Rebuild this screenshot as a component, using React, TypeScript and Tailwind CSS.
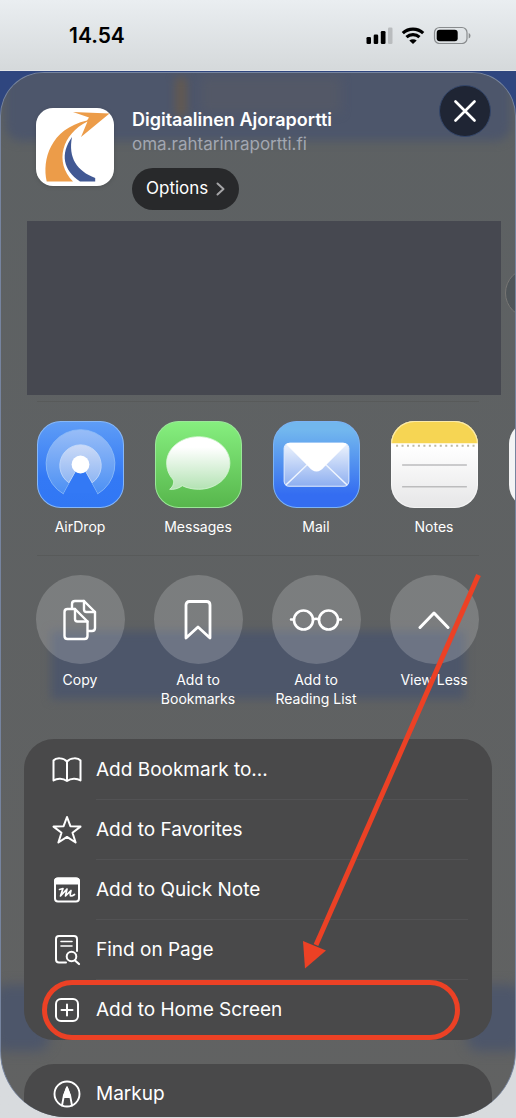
import React from 'react';

interface ListRowProps {
  icon: React.ReactNode;
  label: string;
  divider?: boolean;
  highlighted?: boolean;
}

const stroke = {
  fill: 'none',
  stroke: '#fff',
  strokeWidth: 2,
  strokeLinecap: 'round' as const,
  strokeLinejoin: 'round' as const,
};

const StatusBar: React.FC = () => (
  <header className="flex h-[71px] items-center justify-between border-b border-[#e3e5e7] bg-gradient-to-b from-[#eaeef1] to-[#d5d9db] pl-[69px] pr-[45px]">
    <time className="pt-px text-[21px] font-semibold text-black">14.54</time>
    <svg width="105" height="18" viewBox="366 25 105 18" aria-label="Signal, Wi-Fi and battery">
      <rect x="366.500" y="36" width="4.500" height="7" rx="1.300" />
      <rect x="373.700" y="33.500" width="4.500" height="9.500" rx="1.300" />
      <rect x="380.800" y="30" width="4.700" height="13" rx="1.300" />
      <rect x="388" y="26.500" width="4.500" height="16.500" rx="1.300" fill="#b9bcbe" />
      <g fill="none" stroke="#000" strokeWidth="3.200">
        <path d="M402.800 32.200a15 15 0 0 1 20.400 0" />
        <path d="M406.500 36.100a9.600 9.600 0 0 1 13 0" />
      </g>
      <path d="M409.300 39.600a5.500 5.500 0 0 1 7.400 0l-3.700 3.400z" />
      <rect x="434.500" y="26.500" width="32.500" height="16" rx="5" fill="none" stroke="#898c8e" strokeWidth="1.200" />
      <rect x="436.700" y="28.700" width="21" height="11.600" rx="3" />
      <path d="M468.700 32v5.400q1.800-.7 1.800-2.700t-1.800-2.700" fill="#898c8e" />
    </svg>
  </header>
);

// Page content that shines through the translucent sheet
const Backdrop: React.FC = () => (
  <div className="pointer-events-none absolute inset-0" aria-hidden="true">
    <div className="absolute inset-x-1 -top-4 h-[84px] rounded-2xl bg-[#4d566b] blur-[5px]" />
    <div className="absolute left-[174px] top-1 h-10 w-3 rounded bg-[#625951] blur-[4px]" />
    <div className="absolute left-[200px] top-1 h-9 w-[140px] rounded bg-[#535867] blur-[5px]" />
    <div className="absolute -right-[40px] top-[195px] size-[50px] rounded-full border border-[#777674] bg-[#4f5559]" />
    <div className="absolute inset-x-[50px] top-[558px] h-[68px] bg-[#4d566a] blur-[5px]" />
    <div className="absolute -left-2 top-[912px] h-[66px] w-14 rounded-xl bg-[#4d566a] blur-[6px]" />
    <div className="absolute -right-2 top-[912px] h-[66px] w-14 rounded-xl bg-[#4d566a] blur-[6px]" />
  </div>
);

const SiteIcon: React.FC = () => (
  <svg width="78" height="78" viewBox="36 108 78 78" className="shrink-0 drop-shadow">
    <rect x="36" y="108" width="78" height="78" rx="17" fill="#fff" />
    <path d="M46.700 181.500C42 160 50 129 87 120.500L89 117.500L73 112L109.500 113.500L81 137L87.500 121.500C62 134 54 162 73 181.500Z" fill="#ec9c49" />
    <path d="M72 137C68 158 77 171 95.200 178V181.500H80C63 170 60 154 72 137Z" fill="#415893" />
  </svg>
);

const AirDropIcon: React.FC = () => (
  <svg width="87" height="87" viewBox="0 0 86 86">
    <defs>
      <linearGradient id="airBg" x2="0" y2="1">
        <stop stopColor="#5f9df6" />
        <stop offset=".65" stopColor="#3379f5" />
        <stop offset="1" stopColor="#3177f4" />
      </linearGradient>
      <linearGradient id="airOuter" x2="0" y2="1">
        <stop stopColor="#98bdf7" />
        <stop offset="1" stopColor="#4c90f4" />
      </linearGradient>
      <linearGradient id="airInner" x2="0" y2="1">
        <stop stopColor="#cbdaf7" />
        <stop offset="1" stopColor="#8fb6f3" />
      </linearGradient>
    </defs>
    <rect x=".5" y=".5" width="85" height="85" rx="23" fill="url(#airBg)" stroke="#86b7f8" />
    <path d="M26 72A34 34 0 1 1 60 72L48 50H38Z" fill="url(#airOuter)" stroke="#8fbdf8" strokeWidth=".8" strokeLinejoin="round" />
    <path d="M31.500 61A20.500 20.500 0 1 1 54.500 61L48 50H38Z" fill="url(#airInner)" stroke="#c4dafa" strokeWidth=".8" />
    <path d="M26.500 72L38.500 50H47.500L59.500 72Z" fill="#3379f5" />
    <circle cx="43" cy="43" r="8.800" fill="#fff" />
  </svg>
);

const MessagesIcon: React.FC = () => (
  <svg width="87" height="87" viewBox="0 0 86 86">
    <defs>
      <linearGradient id="msgBg" x2="0" y2="1">
        <stop stopColor="#86ef7f" />
        <stop offset="1" stopColor="#57b64c" />
      </linearGradient>
      <linearGradient id="msgBubble" x2="0" y2="1">
        <stop offset=".2" stopColor="#fff" />
        <stop offset="1" stopColor="#b3e2b3" />
      </linearGradient>
    </defs>
    <rect x=".5" y=".5" width="85" height="85" rx="23" fill="url(#msgBg)" stroke="#9be799" />
    <path d="M43 15.500C60.500 15.500 74 27 74 41.500S60.500 67.500 43 67.500C37 67.500 31 66 27 64C23 67 18 68 14.500 67.500C18 65 19.500 60 17.500 57.500C13.500 53 11.500 47.500 11.500 41.500C11.500 27 25.500 15.500 43 15.500Z" fill="url(#msgBubble)" stroke="#d9f6d8" strokeWidth=".8" />
  </svg>
);

const MailIcon: React.FC = () => (
  <svg width="87" height="87" viewBox="0 0 86 86">
    <defs>
      <linearGradient id="mailBg" x2="0" y2="1">
        <stop offset=".1" stopColor="#72b7ee" />
        <stop offset=".85" stopColor="#346df1" />
      </linearGradient>
      <linearGradient id="mailBody" x2="0" y2="1">
        <stop stopColor="#eef4fd" />
        <stop offset="1" stopColor="#8eaff0" />
      </linearGradient>
    </defs>
    <rect x=".5" y=".5" width="85" height="85" rx="23" fill="url(#mailBg)" stroke="#7cb3f5" />
    <rect x="11" y="22" width="64" height="42.500" rx="5" fill="url(#mailBody)" stroke="#dfebfd" />
    <path d="M13 63L34 43M73 63L52 43" stroke="#eff5fe" strokeWidth="1.500" />
    <path d="M13 23Q14 21.500 17 21.500H69Q72 21.500 73 23L51 45Q43 55 35 45Z" fill="#fff" />
  </svg>
);

const NotesIcon: React.FC = () => (
  <svg width="87" height="87" viewBox="0 0 86 86">
    <defs>
      <linearGradient id="notesBg" x2="0" y2="1">
        <stop offset=".3" stopColor="#fff" />
        <stop offset="1" stopColor="#e6e6e7" />
      </linearGradient>
      <clipPath id="notesClip">
        <rect width="86" height="86" rx="23" />
      </clipPath>
    </defs>
    <g clipPath="url(#notesClip)">
      <rect width="86" height="86" fill="url(#notesBg)" />
      <rect width="86" height="22" fill="#f6d553" />
    </g>
    <rect x=".5" y=".5" width="85" height="85" rx="23" fill="none" stroke="#fff" strokeOpacity=".5" />
    <path d="M5 24.500H84" stroke="#bdb9a4" strokeWidth="2" strokeDasharray="2 3.400" />
    <path d="M11 43.500H75M11 65H75" stroke="#bcbcbd" strokeWidth="1.600" />
  </svg>
);

const CopyIcon = (
  <svg width="34" height="42" viewBox="64 598 34 42" {...stroke} strokeWidth="2.400">
    <path d="M73 607V603Q73 600 76 600H85L96 611V627Q96 630 93 630H89.500" />
    <path d="M85 600V608.500Q85 611 87.500 611H96" />
    <path d="M68 608H76L88.500 620.500V635Q88.500 638 85.500 638H68.500Q65.500 638 65.500 635V611Q65.500 608 68.500 608" />
    <path d="M76 608V618Q76 620.500 78.500 620.500H88.500" />
  </svg>
);

const BookmarkIcon = (
  <svg width="28" height="42" viewBox="0 0 28 42" {...stroke} strokeWidth="2.800">
    <path d="M2 39V6Q2 2.500 5.500 2.500H22.500Q26 2.500 26 6V39L14 28Z" />
  </svg>
);

const GlassesIcon = (
  <svg width="54" height="24" viewBox="0 0 54 24" {...stroke} strokeWidth="2.600">
    <circle cx="14.500" cy="12" r="9.500" />
    <circle cx="39.500" cy="12" r="9.500" />
    <path d="M24 11.500Q27 10 30 11.500M4.500 11.500H2M49.500 11.500H52" />
  </svg>
);

const ChevronUpIcon = (
  <svg width="32" height="20" viewBox="0 0 32 20" {...stroke} strokeWidth="3">
    <path d="M2 17.500L16 3L30 17.500" />
  </svg>
);

const BookIcon = (
  <svg width="30" height="26" viewBox="0 0 30 26" {...stroke}>
    <path d="M15 4.500C11.500 .5 4 .5 1.500 3.500V23.500C5 21 11 21 15 24C19 21 25 21 28.500 23.500V3.500C26 .5 18.500 .5 15 4.500ZM15 4.500V24" />
  </svg>
);

const StarIcon = (
  <svg width="30" height="30" viewBox="0 0 30 30" {...stroke}>
    <path d="M15 2L18.400 11.200L28.500 11.600L20.500 17.700L23.600 27.500L15 21.900L6.400 27.500L9.500 17.700L1.500 11.600L11.600 11.200Z" />
  </svg>
);

const QuickNoteIcon = (
  <svg width="28" height="26" viewBox="0 0 28 26" {...stroke}>
    <rect x="2" y="1.500" width="24" height="23" rx="3" />
    <path d="M2 6.500V4.500Q2 1.500 5 1.500H23Q26 1.500 26 4.500V6.500Z" fill="#fff" />
    <path d="M6.500 12.500L10 11.500L7.500 19L14 12L12.500 19L18 13.500Q16.500 19 18 19Q19.500 19 21.500 17.500" strokeWidth="1.700" />
  </svg>
);

const FindIcon = (
  <svg width="28" height="32" viewBox="0 0 28 32" {...stroke}>
    <path d="M13 28.500H6Q3 28.500 3 25.500V5Q3 2 6 2H21Q24 2 24 5V17" />
    <path d="M8 7.500H19M8 12H19" strokeWidth="1.600" />
    <circle cx="18.500" cy="22.500" r="4.800" />
    <path d="M22 26.500L26 30" strokeWidth="2.200" />
  </svg>
);

const AddBoxIcon = (
  <svg width="26" height="26" viewBox="0 0 26 26" {...stroke}>
    <rect x="2" y="2" width="22" height="22" rx="5" />
    <path d="M13 7.500V18.500M7.500 13H18.500" />
  </svg>
);

const MarkupIcon = (
  <svg width="28" height="28" viewBox="0 0 28 28" {...stroke} strokeWidth="1.900">
    <circle cx="14" cy="14" r="12.500" />
    <path d="M9 25.500L11 15L14 7.500L17 15L19 25.500M10.700 17H17.300" />
    <path d="M11.500 15L14 7.500L16.500 15Z" fill="#fff" />
  </svg>
);

const apps = [
  { name: 'AirDrop', icon: <AirDropIcon /> },
  { name: 'Messages', icon: <MessagesIcon /> },
  { name: 'Mail', icon: <MailIcon /> },
  { name: 'Notes', icon: <NotesIcon /> },
];

const actions = [
  { name: 'Copy', icon: CopyIcon },
  { name: 'Add to Bookmarks', icon: BookmarkIcon },
  { name: 'Add to Reading List', icon: GlassesIcon },
  { name: 'View Less', icon: ChevronUpIcon },
];

const ListRow: React.FC<ListRowProps> = ({ icon, label, divider, highlighted }) => (
  <li className="relative">
    <button type="button" className="flex h-[60px] w-full items-center pl-6 text-left">
      <span className="flex w-[38px] shrink-0 justify-center">{icon}</span>
      <span className="ml-[10px] text-[19px] text-white">{label}</span>
    </button>
    {divider && <div className="absolute bottom-0 left-[72px] right-6 h-px bg-[#525254]" />}
    {highlighted && (
      <div className="pointer-events-none absolute inset-y-0 left-[18px] right-8 rounded-full border-[5px] border-[#ec4125]" />
    )}
  </li>
);

const App: React.FC = () => {
  return (
    <div className="min-h-screen overflow-hidden bg-gradient-to-b from-[#2f467f] from-15% via-[#7489ad] via-70% to-[#d8dbde] to-95% font-['Inter',sans-serif]">
      <StatusBar />
      <main className="relative mt-px overflow-hidden rounded-b-[66px] rounded-t-[44px] border border-b-0 border-[#76849f] bg-gradient-to-b from-[#5d6163] to-[#616262]">
        <Backdrop />

        <div className="relative">
          <section className="flex pl-[35px] pr-6 pt-[35px]">
            <SiteIcon />
            <div className="ml-[18px] flex-1">
              <h1 className="whitespace-nowrap text-lg font-semibold leading-6 text-white">Digitaalinen Ajoraportti</h1>
              <p className="text-[17px] leading-6 text-[#a2a7b1]">oma.rahtarinraportti.fi</p>
              <button type="button" className="mt-3 flex h-[42px] items-center gap-2 rounded-full bg-[#28292b] px-[14px] text-[17px] text-white">
                Options
                <svg width="9" height="14" viewBox="0 0 9 14" {...stroke} stroke="#a5a5a7">
                  <path d="M1.500 1.500L7.500 7L1.500 12.500" />
                </svg>
              </button>
            </div>
            <button type="button" aria-label="Close" className="-mt-[23px] flex size-[52px] items-center justify-center rounded-full border border-[#344669] bg-[#1f2534]">
              <svg width="22" height="22" viewBox="0 0 22 22" {...stroke} strokeWidth="2.600">
                <path d="M1.500 1.500L20.500 20.500M20.500 1.500L1.500 20.500" />
              </svg>
            </button>
          </section>

          <div className="ml-[26px] mr-[14px] mt-[11px] h-[174px] bg-[#464850]" />

          <section className="mt-[6px]">
            <div className="mx-9 h-px bg-[#585a5a]" />
            <ul className="flex overflow-hidden pl-5 pt-[19px]">
              {apps.map((app) => (
                <li key={app.name} className="w-[118px] shrink-0">
                  <button type="button" className="flex w-full flex-col items-center">
                    {app.icon}
                    <span className="mt-[9px] text-sm leading-5 text-white">{app.name}</span>
                  </button>
                </li>
              ))}
              <li className="ml-4 size-[87px] shrink-0 rounded-[23px] bg-[#f3f3f4]" />
            </ul>
          </section>

          <section className="mt-[18px]">
            <div className="mx-9 h-px bg-[#585a5a]" />
            <ul className="flex overflow-hidden pl-5 pt-[19px]">
              {actions.map((action) => (
                <li key={action.name} className="w-[118px] shrink-0">
                  <button type="button" className="flex w-full flex-col items-center">
                    <span className="flex size-[89px] items-center justify-center rounded-full bg-white/18">
                      {action.icon}
                    </span>
                    <span className="mt-[6px] px-3 text-sm leading-[19px] text-white">{action.name}</span>
                  </button>
                </li>
              ))}
            </ul>
          </section>

          <ul className="mx-[23px] mt-[31px] rounded-[30px] bg-[#49494a] pt-px">
            <ListRow icon={BookIcon} label="Add Bookmark to..." divider />
            <ListRow icon={StarIcon} label="Add to Favorites" divider />
            <ListRow icon={QuickNoteIcon} label="Add to Quick Note" divider />
            <ListRow icon={FindIcon} label="Find on Page" divider />
            <ListRow icon={AddBoxIcon} label="Add to Home Screen" highlighted />
          </ul>

          <ul className="mx-[23px] mt-6 h-[53px] rounded-t-[30px] bg-[#49494a]">
            <ListRow icon={MarkupIcon} label="Markup" />
          </ul>

          {/* Arrow to the highlighted row */}
          <svg className="pointer-events-none absolute left-[300px] top-[500px]" width="184" height="400" viewBox="301 573 184 400" aria-hidden="true">
            <path d="M478.500 575L316 945" stroke="#ec4125" strokeWidth="5" />
            <path d="M303 941L326 950.500L305 968.500Z" fill="#ec4125" />
          </svg>
        </div>
      </main>
    </div>
  );
};

export default App;
